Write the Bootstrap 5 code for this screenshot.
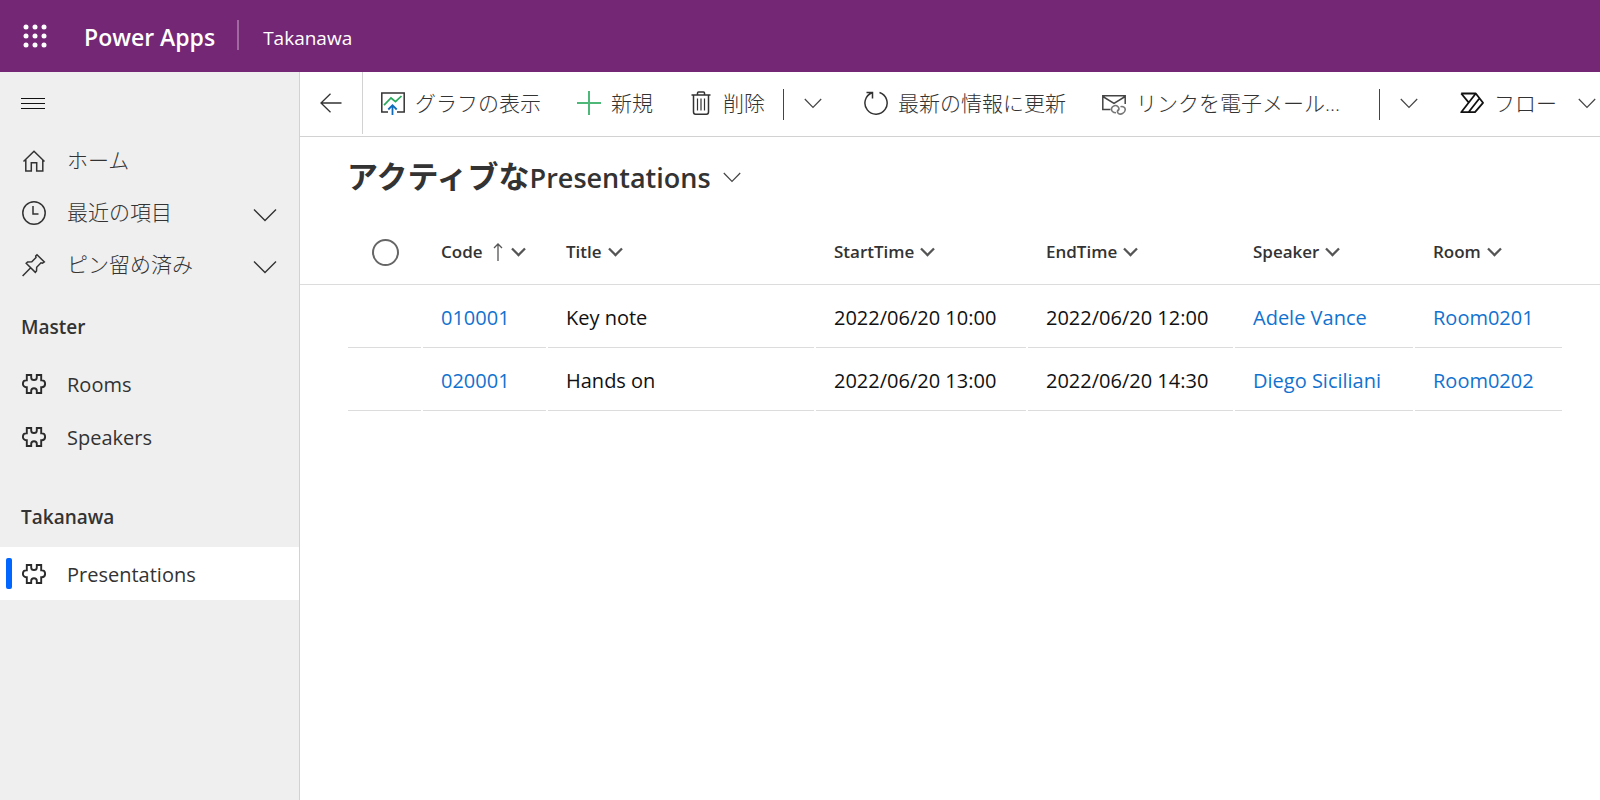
<!DOCTYPE html>
<html lang="ja">
<head>
<meta charset="utf-8">
<meta name="viewport" content="width=device-width, initial-scale=1">
<title>Presentations - Power Apps</title>
<link href="https://cdn.jsdelivr.net/npm/bootstrap@5.3.0/dist/css/bootstrap.min.css" rel="stylesheet">
<style>
  body { font-family: "Open Sans", "Noto Sans CJK JP", sans-serif; font-size: 20px; line-height: 28px; color: #333; }
  svg { display: block; flex: none; }
  button { color: inherit; }
  .plain { background: none; border: 0; padding: 0; }
  .app-header { background: #742774; height: 72px; padding-left: 23px; }
  .brand { font-size: 23px; font-weight: 600; margin-left: 37px; padding-top: 2px; }
  .brand-rule { width: 2px; height: 30px; background: #a06aa0; margin: 0 24px 2px 22px; }
  .env { padding-top: 3px; font-size: 19px; }
  .side { width: 300px; background: #efefef; border-right: 1px solid #d2d2d2; }
  .menu-btn { height: 63px; padding-left: 21px; }
  .side-link { height: 52px; padding: 0 22px 0 22px; gap: 21px; color: #333; text-decoration: none; width: 100%; text-align: left; }
  .side-link.entity { height: 53px; }
  .side-link.entity span { padding-top: 3px; }
  .side-link.current { background: #fff; }
  .side-link.current::before { content: ""; position: absolute; left: 6px; top: 11px; width: 6px; height: 31px; border-radius: 2px; background: #06f; }
  .jp { font-size: 21px; font-weight: 300; }
  .side-link .jp { padding-bottom: 2px; }
  .side-head { font-size: 19px; font-weight: 600; padding: 22px 0 16px 21px; margin: 0; line-height: 28px; }
  .side-head-next { padding-top: 40px; }
  .cmd-bar { height: 65px; border-bottom: 1px solid #d2d2d2; }
  .cmd-bar > * { flex-shrink: 0; }
  .back { width: 63px; height: 62px; border-right: 1px solid #d2d2d2; padding-left: 20px; }
  .cmd { gap: 10px; padding: 0 18px; height: 62px; white-space: nowrap; }
  .cmd-wide { min-width: 259px; box-sizing: content-box; }
  .cmd-rule { width: 1px; height: 31px; background: #444; }
  .cmd-more { padding: 0 24px 0 20px; height: 62px; }
  .cmd-chev { margin-left: 11px; }
  .view-title { font-size: 27px; font-weight: 600; line-height: 40px; margin: 0; }
  .view-title .view-kana { font-size: 31px; font-weight: 700; }
  .view-head { padding: 19px 0 4px 47px; }
  .grid-table { table-layout: fixed; width: 100%; border-collapse: separate; border-spacing: 0; }
  .grid-table th { height: 83px; padding: 18px 0 0 18px; border-bottom: 1px solid #dcdcdc; font-size: 17px; font-weight: 600; vertical-align: middle; }
  .col-head { gap: 6px; }
  .grid-table tbody td { height: 63px; padding: 3px 0 0 18px; color: #111; vertical-align: middle; background: linear-gradient(#dcdcdc, #dcdcdc) left bottom / calc(100% - 2px) 1px no-repeat; }
  .grid-table tbody td.edge { background: none; }
  .grid-table tbody td.final { background-size: 100% 1px; }
  .grid-table a { color: #1272cf; text-decoration: none; }
  .round-check { appearance: none; width: 27px; height: 27px; border: 2px solid #666; border-radius: 50%; margin: 0 0 0 6px; display: block; background: #fff; }
  .w-lead { width: 48px; } .w-check { width: 75px; } .w-code { width: 125px; } .w-start { width: 212px; }
  .w-end { width: 207px; } .w-speaker { width: 180px; } .w-room { width: 147px; } .w-tail { width: 38px; }
</style>
</head>
<body class="bg-white d-flex flex-column min-vh-100 overflow-x-hidden">
<svg class="d-none" aria-hidden="true">
  <symbol id="puzzle" viewBox="0 0 24 24"><path d="M4.800 3H9.200V5.400C9.200 6.900 10.400 8 12 8S14.800 6.900 14.800 5.400V3H19.200V8.400H19.900C21.700 8.400 23.100 9.900 23.100 11.800S21.700 15.200 19.900 15.200H19.200V21H14.800V18.800C14.800 17.300 13.600 16.200 12 16.200S9.200 17.300 9.200 18.800V21H4.800V15.200H4.100C2.300 15.200 .9 13.700 .9 11.800S2.300 8.400 4.100 8.400H4.800Z" fill="none" stroke="#2b2b2b" stroke-width="1.900"/></symbol>
  <symbol id="chev-side" viewBox="0 0 24 14"><path d="M1 1.500 12 12.500 23 1.500" fill="none" stroke="#333" stroke-width="1.400"/></symbol>
  <symbol id="chev-thin" viewBox="0 0 18 11"><path d="M.8 1 9 9.500 17.200 1" fill="none" stroke="#444" stroke-width="1.200"/></symbol>
  <symbol id="chev-bold" viewBox="0 0 15 10"><path d="M1 1.500 7.500 8 14 1.500" fill="none" stroke="#555" stroke-width="2.300"/></symbol>
</svg>

<header class="app-header d-flex align-items-center text-white">
  <button class="plain" aria-label="アプリ起動ツール">
    <svg width="24" height="24" viewBox="0 0 24 24" fill="#fff"><circle cx="3" cy="3" r="2.500"/><circle cx="12" cy="3" r="2.500"/><circle cx="21" cy="3" r="2.500"/><circle cx="3" cy="12" r="2.500"/><circle cx="12" cy="12" r="2.500"/><circle cx="21" cy="12" r="2.500"/><circle cx="3" cy="21" r="2.500"/><circle cx="12" cy="21" r="2.500"/><circle cx="21" cy="21" r="2.500"/></svg>
  </button>
  <a class="brand text-white text-decoration-none" href="#">Power Apps</a>
  <span class="brand-rule"></span>
  <span class="env">Takanawa</span>
</header>

<div class="d-flex flex-grow-1">
  <nav class="side flex-shrink-0">
    <button class="plain menu-btn d-flex align-items-center" aria-label="サイト マップ">
      <svg width="24" height="12" viewBox="0 0 24 12"><path d="M0 .5H24M0 5.500H24M0 10.500H24" stroke="#111"/></svg>
    </button>
    <a class="side-link d-flex align-items-center" href="#">
      <svg width="24" height="24" viewBox="0 0 24 24" fill="none" stroke="#333" stroke-width="1.500"><path d="M1.500 12.500 12 2.300 22.500 12.500M3.800 10.500V22H9.300V13.800H14.700V22H20.800V10.500"/></svg>
      <span class="jp">ホーム</span>
    </a>
    <button class="plain side-link d-flex align-items-center">
      <svg width="24" height="24" viewBox="0 0 24 24" fill="none" stroke="#333" stroke-width="1.500"><circle cx="12" cy="12" r="11.200"/><path d="M11 5V13H16.500"/></svg>
      <span class="jp">最近の項目</span>
      <svg class="ms-auto mt-1" width="24" height="14"><use href="#chev-side"/></svg>
    </button>
    <button class="plain side-link d-flex align-items-center">
      <svg width="24" height="24" viewBox="0 0 24 24" fill="none" stroke="#333" stroke-width="1.500"><path d="M15 1.800 22.300 9 20.500 10.200 19 9.800 14.700 14.200 14.500 18 13.300 19.400 4.200 10.300 5.600 9 9.800 8.800 14 4.500 13.700 3ZM8.700 14.800 .6 23"/></svg>
      <span class="jp">ピン留め済み</span>
      <svg class="ms-auto mt-1" width="24" height="14"><use href="#chev-side"/></svg>
    </button>
    <h2 class="side-head">Master</h2>
    <a class="side-link entity d-flex align-items-center" href="#"><svg width="24" height="24"><use href="#puzzle"/></svg><span>Rooms</span></a>
    <a class="side-link entity d-flex align-items-center" href="#"><svg width="24" height="24"><use href="#puzzle"/></svg><span>Speakers</span></a>
    <h2 class="side-head side-head-next">Takanawa</h2>
    <a class="side-link entity current position-relative d-flex align-items-center" href="#" aria-current="page"><svg width="24" height="24"><use href="#puzzle"/></svg><span>Presentations</span></a>
  </nav>

  <main class="flex-grow-1 overflow-hidden">
    <div class="cmd-bar d-flex align-items-start" role="toolbar">
      <button class="plain back d-flex align-items-center" aria-label="戻る">
        <svg width="22" height="20" viewBox="0 0 22 20" fill="none" stroke="#333" stroke-width="1.300"><path d="M21.500 10H1M10.500 .8 1 10 10.500 19.200"/></svg>
      </button>
      <button class="plain cmd d-flex align-items-center">
        <svg width="24" height="24" viewBox="0 0 24 24" fill="none"><path d="M7 21H.8V2H23.200V21H16" stroke="#333" stroke-width="1.500"/><path d="M3 14.200 10 7 14.500 10.700 20.500 5" stroke="#27a85a" stroke-width="1.700"/><path d="M11.500 24V14.500M7.300 18.500 11.500 14.200 15.700 18.500" stroke="#0f6cbd" stroke-width="1.800"/></svg>
        <span class="jp">グラフの表示</span>
      </button>
      <button class="plain cmd d-flex align-items-center">
        <svg width="24" height="24" viewBox="0 0 24 24"><path d="M12 0V24M0 12H24" stroke="#4db877" stroke-width="2"/></svg>
        <span class="jp">新規</span>
      </button>
      <button class="plain cmd d-flex align-items-center">
        <svg width="24" height="24" viewBox="0 0 24 24" fill="none" stroke="#333" stroke-width="1.500"><path d="M2.500 4H21.500M4.500 4V21C4.500 22.500 5.200 23.200 6.500 23.200H17.500C18.800 23.200 19.500 22.500 19.500 21V4M8.500 4V2C8.500 1.300 9 1 9.500 1H14.500C15 1 15.500 1.300 15.500 2V4"/><path d="M8.500 7.500V19.500M12 7.500V19.500M15.500 7.500V19.500" stroke-width="1.200"/></svg>
        <span class="jp">削除</span>
      </button>
      <span class="cmd-rule align-self-center"></span>
      <button class="plain cmd-more" aria-label="削除のその他のコマンド"><svg width="18" height="11"><use href="#chev-thin"/></svg></button>
      <button class="plain cmd d-flex align-items-center">
        <svg width="24" height="24" viewBox="0 0 24 24" fill="none" stroke="#333" stroke-width="1.500"><path d="M15.500 1.500A11.100 11.100 0 1 1 8 1.700M2.500 1.500H8.500V7.500"/></svg>
        <span class="jp">最新の情報に更新</span>
      </button>
      <button class="plain cmd cmd-wide d-flex align-items-center">
        <svg width="24" height="24" viewBox="0 0 24 24" fill="none" stroke="#444" stroke-width="1.500"><path d="M8.500 18.500H.8V4.800H23.200V13M.8 5.500 12 12.300 23.200 5.500"/><path d="M14 21.800C11 21.800 9 19.800 9.600 17.300C10.300 14.500 14 13.600 16 15.700C17.700 17.500 17 19.700 15.300 20.300M18.500 15.800C21 15 23.500 16.500 23.200 19C22.800 22 18.800 24.300 16.300 22.300C14.800 21 15.300 19.200 16.800 18.500" stroke="#777" stroke-width="1.600"/></svg>
        <span class="jp">リンクを電子メール...</span>
      </button>
      <span class="cmd-rule align-self-center"></span>
      <button class="plain cmd-more" aria-label="リンクのその他のコマンド"><svg width="18" height="11"><use href="#chev-thin"/></svg></button>
      <button class="plain cmd d-flex align-items-center">
        <svg width="24" height="24" viewBox="0 0 24 24" fill="none" stroke="#111" stroke-width="1.800" stroke-linejoin="round"><path d="M1.200 2.500H15.800L23 11.800 15 21.200H1.200L15.800 2.500M1.200 2.500 9 11.800M19.500 7.200 8.500 21.200"/></svg>
        <span class="jp">フロー</span>
        <svg class="cmd-chev" width="18" height="11"><use href="#chev-thin"/></svg>
      </button>
    </div>

    <div class="view-head">
      <button class="plain d-flex align-items-center gap-2">
        <span class="view-title"><span class="view-kana">アクティブな</span>Presentations</span>
        <svg class="ms-1" width="18" height="11"><use href="#chev-thin"/></svg>
      </button>
    </div>

    <table class="grid-table">
      <colgroup><col class="w-lead"><col class="w-check"><col class="w-code"><col><col class="w-start"><col class="w-end"><col class="w-speaker"><col class="w-room"><col class="w-tail"></colgroup>
      <thead>
        <tr>
          <th></th>
          <th><input type="checkbox" class="round-check" aria-label="すべての行を選択"></th>
          <th><button class="plain col-head d-flex align-items-center fw-semibold">Code <span class="d-flex align-items-center gap-2 ms-1"><svg width="10" height="18" viewBox="0 0 10 18" fill="none" stroke="#555" stroke-width="1.300"><path d="M5 18V1M1 5 5 1 9 5"/></svg><svg width="15" height="10"><use href="#chev-bold"/></svg></span></button></th>
          <th><button class="plain col-head d-flex align-items-center fw-semibold">Title <svg width="15" height="10"><use href="#chev-bold"/></svg></button></th>
          <th><button class="plain col-head d-flex align-items-center fw-semibold">StartTime <svg width="15" height="10"><use href="#chev-bold"/></svg></button></th>
          <th><button class="plain col-head d-flex align-items-center fw-semibold">EndTime <svg width="15" height="10"><use href="#chev-bold"/></svg></button></th>
          <th><button class="plain col-head d-flex align-items-center fw-semibold">Speaker <svg width="15" height="10"><use href="#chev-bold"/></svg></button></th>
          <th><button class="plain col-head d-flex align-items-center fw-semibold">Room <svg width="15" height="10"><use href="#chev-bold"/></svg></button></th>
          <th></th>
        </tr>
      </thead>
      <tbody>
        <tr>
          <td class="edge"></td><td></td>
          <td><a href="#">010001</a></td><td>Key note</td><td>2022/06/20 10:00</td><td>2022/06/20 12:00</td>
          <td><a href="#">Adele Vance</a></td><td class="final"><a href="#">Room0201</a></td><td class="edge"></td>
        </tr>
        <tr>
          <td class="edge"></td><td></td>
          <td><a href="#">020001</a></td><td>Hands on</td><td>2022/06/20 13:00</td><td>2022/06/20 14:30</td>
          <td><a href="#">Diego Siciliani</a></td><td class="final"><a href="#">Room0202</a></td><td class="edge"></td>
        </tr>
      </tbody>
    </table>
  </main>
</div>
<script src="https://cdn.jsdelivr.net/npm/bootstrap@5.3.0/dist/js/bootstrap.bundle.min.js"></script>
</body>
</html>
